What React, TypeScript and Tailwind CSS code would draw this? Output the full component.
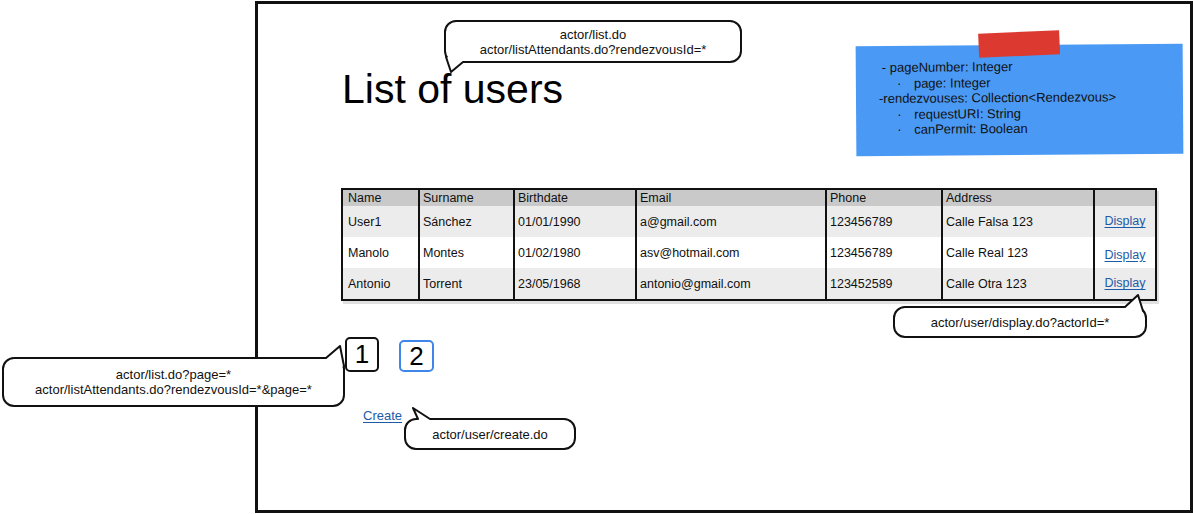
import React from "react";

type Row = {
  name: string;
  surname: string;
  birthdate: string;
  email: string;
  phone: string;
  address: string;
  linkPad: string;
};

const rows: Row[] = [
  { name: "User1", surname: "Sánchez", birthdate: "01/01/1990", email: "a@gmail.com", phone: "123456789", address: "Calle Falsa 123", linkPad: "pt-0" },
  { name: "Manolo", surname: "Montes", birthdate: "01/02/1980", email: "asv@hotmail.com", phone: "123456789", address: "Calle Real 123", linkPad: "pt-[5px]" },
  { name: "Antonio", surname: "Torrent", birthdate: "23/05/1968", email: "antonio@gmail.com", phone: "123452589", address: "Calle Otra 123", linkPad: "pt-0" },
];

const headers = ["Name", "Surname", "Birthdate", "Email", "Phone", "Address", ""];

// callout bubbles sit over the mockup, so they are placed absolutely
const Callout: React.FC<{ className: string; lines: string[] }> = ({ className, lines }) => (
  <div
    className={`absolute flex flex-col items-center justify-center rounded-[12px] border-2 border-[#111] bg-white text-[13px] leading-[15px] text-[#111] ${className}`}
  >
    {lines.map((l) => (
      <div key={l}>{l}</div>
    ))}
  </div>
);

const tails = [
  { fill: "M449 55 L447 58 L451 72 L463 62 L463 57 Z", stroke: "M446 57 L451 72 L463 62" },
  { fill: "M1125 310 L1125 307 L1138 295 L1143 311 L1140 313 Z", stroke: "M1125 307 L1138 295 L1143 311" },
  { fill: "M326 361 L326 358 L340 346 L344 366 L340 367 Z", stroke: "M326 358 L340 346 L344 366" },
  { fill: "M418 422 L418 419 L413 408 L430 419 L430 422 Z", stroke: "M418 419 L413 408 L430 419" },
];

export default function App() {
  return (
    <div className="relative h-[514px] w-[1193px] overflow-hidden bg-white font-['Liberation_Sans',Arial,sans-serif] text-[#111]">
      {/* window frame */}
      <div className="ml-[255px] mt-[1px] flex h-[512px] w-[938px] flex-col border-[3px] border-[#111]">
        <div className="flex items-start justify-between">
          <h1 className="ml-[84px] mt-[65px] text-[41px] leading-[41px] text-black">List of users</h1>

          {/* sticky note */}
          <div className="relative mr-[7px] mt-[41px] h-[110px] w-[327px] -rotate-[0.4deg] bg-[#4a99f5] pt-[14px] text-[13px] leading-[15.6px] text-[#111]">
            <div className="absolute left-[123px] top-[-13px] h-[24px] w-[81px] -rotate-2 bg-[#dc3a30]" />
            <div className="pl-[26px]">- pageNumber: Integer</div>
            <div className="flex">
              <span className="w-[58px] pl-[41px]">·</span>
              <span>page: Integer</span>
            </div>
            <div className="pl-[23px]">-rendezvouses: Collection&lt;Rendezvous&gt;</div>
            <div className="flex">
              <span className="w-[58px] pl-[41px]">·</span>
              <span>requestURI: String</span>
            </div>
            <div className="flex">
              <span className="w-[58px] pl-[41px]">·</span>
              <span>canPermit: Boolean</span>
            </div>
          </div>
        </div>

        {/* table */}
        <div className="ml-[83px] mt-[33px] w-[816px] border-2 border-[#111] shadow-[2px_3px_0_rgba(0,0,0,0.12)]">
          <div className="grid grid-cols-[75px_95px_122px_190px_116px_152px_62px] bg-[#c9c9c9] text-[12.5px] leading-[16px]">
            {headers.map((h, i) => (
              <div key={i} className={`h-[16px] ${i === 0 ? "pl-[5px]" : "border-l-2 border-[#111] pl-[3px]"}`}>
                {h}
              </div>
            ))}
          </div>
          {rows.map((r, ri) => (
            <div
              key={r.name}
              className={`grid grid-cols-[75px_95px_122px_190px_116px_152px_62px] text-[12.5px] ${ri === 1 ? "bg-white" : "bg-[#ececec]"}`}
            >
              {[r.name, r.surname, r.birthdate, r.email, r.phone, r.address].map((c, i) => (
                <div key={i} className={`flex h-[31px] items-center pt-[2px] ${i === 0 ? "pl-[5px]" : "border-l-2 border-[#111] pl-[3px]"}`}>
                  {c}
                </div>
              ))}
              <div className={`flex h-[31px] items-center justify-center border-l-2 border-[#111] ${r.linkPad}`}>
                <a href="#" className="text-[#1d5aa8] underline underline-offset-2">
                  Display
                </a>
              </div>
            </div>
          ))}
        </div>

        {/* pagination */}
        <div className="ml-[87px] mt-[36px] flex items-end gap-[20px]">
          <div className="flex h-[35px] w-[34px] items-center justify-center rounded-[5px] border-2 border-[#111] text-[26px] text-black">
            1
          </div>
          <div className="flex h-[32px] w-[35px] items-center justify-center rounded-[5px] border-[2.5px] border-[#3f86ea] text-[26px] text-black">
            2
          </div>
        </div>

        <a href="#" className="ml-[105px] mt-[36px] w-fit text-[13px] leading-[16px] text-[#1d5aa8] underline underline-offset-2">
          Create
        </a>
      </div>

      <Callout
        className="left-[444px] top-[20px] h-[43px] w-[298px]"
        lines={["actor/list.do", "actor/listAttendants.do?rendezvousId=*"]}
      />
      <Callout className="left-[893px] top-[306px] h-[32px] w-[254px]" lines={["actor/user/display.do?actorId=*"]} />
      <Callout
        className="left-[2px] top-[357px] h-[50px] w-[343px]"
        lines={["actor/list.do?page=*", "actor/listAttendants.do?rendezvousId=*&page=*"]}
      />
      <Callout className="left-[404px] top-[418px] h-[32px] w-[172px]" lines={["actor/user/create.do"]} />

      <svg className="pointer-events-none absolute left-0 top-0" width="1193" height="514">
        {tails.map((t, i) => (
          <g key={i}>
            <path d={t.fill} fill="#fff" />
            <path d={t.stroke} fill="none" stroke="#111" strokeWidth="2" strokeLinejoin="round" strokeLinecap="round" />
          </g>
        ))}
      </svg>
    </div>
  );
}
